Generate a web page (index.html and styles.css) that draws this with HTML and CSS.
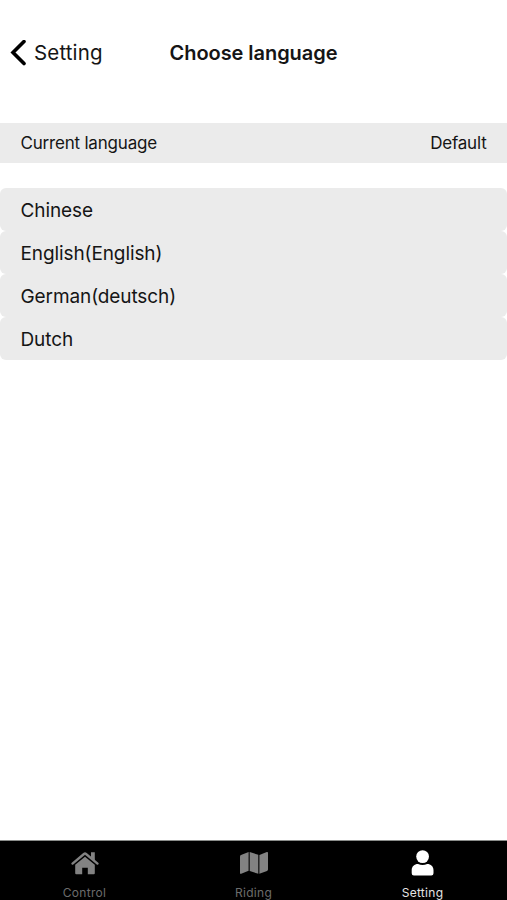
FILE: index.html
```
<!DOCTYPE html>
<html lang="en">

<head>
  <meta charset="UTF-8">
  <meta name="viewport" content="width=device-width, initial-scale=1.0">
  <title>Choose language</title>
  <link rel="stylesheet" href="styles.css">
</head>

<body>
  <header class="header">
    <a class="back">
      <svg class="back-icon" width="16" height="26" viewBox="0 0 16 26">
        <path d="M14 1.5L3 12.5L14 23.5" />
      </svg>
      <span>Setting</span>
    </a>
    <h1 class="title">Choose language</h1>
  </header>

  <main class="main">
    <div class="current">
      <span>Current language</span>
      <span>Default</span>
    </div>
    <ul class="list">
      <li>Chinese</li>
      <li>English(English)</li>
      <li>German(deutsch)</li>
      <li>Dutch</li>
    </ul>
  </main>

  <nav class="tabbar">
    <a class="tab">
      <svg width="28" height="24" viewBox="0 0 28 24">
        <path d="M14 5.7L23.8 13.8V22.2Q23.8 23.2 22.8 23.2H16.8V16.8H11.2V23.2H5.2Q4.2 23.2 4.2 22.2V13.8Z" />
        <path d="M20 1.2H23.8V9.5L20 6.5Z" />
        <path class="roof" d="M1.5 12.6L13 3Q14 2.2 15 3L26.5 12.6" />
      </svg>
      <span>Control</span>
    </a>
    <a class="tab">
      <svg width="28" height="24" viewBox="0 0 28 24">
        <path d="M0 5.4Q0 4.4 1 4L8.6 1.1V19.8L1.2 22.8Q0 23.2 0 22.1Z" />
        <path d="M9.7 1.1L18.3 3.8V22.8L9.7 20Z" />
        <path d="M19.4 4L26.8 1.1Q28 .7 28 1.8V18.5Q28 19.5 27 19.9L19.4 22.8Z" />
      </svg>
      <span>Riding</span>
    </a>
    <a class="tab active">
      <svg width="28" height="24" viewBox="0 0 28 24">
        <circle cx="13.6" cy="5.6" r="6.4" />
        <path d="M9 13Q13.6 14.8 18.2 13C21.8 13 24.5 15.4 24.5 19.2V22.2Q24.5 24.4 22.3 24.4H4.9Q2.7 24.4 2.7 22.2V19.2C2.7 15.4 5.4 13 9 13Z" />
      </svg>
      <span>Setting</span>
    </a>
  </nav>
</body>

</html>
```

FILE: styles.css
```
* {
  padding: 0;
  margin: 0;
  box-sizing: border-box;
}

body {
  display: flex;
  flex-direction: column;
  height: 100vh;
  overflow: hidden;
  background-color: #fff;
  color: #151515;
  font-family: Inter, "Liberation Sans", sans-serif;
}

.header {
  display: grid;
  grid-template-columns: 1fr auto 1fr;
  align-items: center;
  height: 123px;
  padding: 0 10px 18px;
}

.back {
  display: flex;
  align-items: center;
  gap: 8px;
  font-size: 20.5px;
  letter-spacing: .15px;
}

.back-icon {
  fill: none;
  stroke: #000;
  stroke-width: 3.6;
  stroke-linecap: round;
  stroke-linejoin: miter;
}

.title {
  font-size: 20px;
  font-weight: 600;
  letter-spacing: -.05px;
}

.main {
  flex: 1;
}

.current {
  display: flex;
  justify-content: space-between;
  align-items: center;
  height: 40px;
  margin-bottom: 25px;
  padding: 0 20.5px;
  background-color: #ebebeb;
  font-size: 17px;
  letter-spacing: -.2px;
}

.list {
  list-style: none;
}

.list li {
  height: 43px;
  padding: 1px 0 0 20.5px;
  border-radius: 6px;
  background-color: #ebebeb;
  font-size: 19px;
  line-height: 43px;
  letter-spacing: -.1px;
}

.tabbar {
  display: flex;
  height: 60px;
  border-top: 1px solid #8a8c8a;
  background-color: #000;
}

.tab {
  flex: 1;
  display: flex;
  flex-direction: column;
  align-items: center;
  gap: 10px;
  padding-top: 10px;
  color: #6c6c6c;
  fill: #828282;
  font-size: 12px;
  line-height: 16px;
  letter-spacing: .3px;
}

.tab svg {
  flex: none;
  overflow: visible;
}

.roof {
  fill: none;
  stroke: #828282;
  stroke-width: 2.4;
  stroke-linecap: round;
}

.active {
  color: #e4e4e4;
  fill: #fff;
}
```
